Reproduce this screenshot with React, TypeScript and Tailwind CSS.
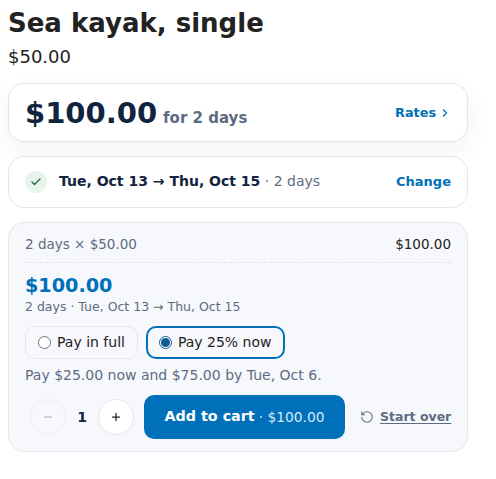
import { Check, ChevronRight, Minus, Plus, RotateCcw } from "lucide-react";

export default function App() {
  return (
    <div className="w-[460px] ml-2 pt-[5px] font-['DejaVu_Sans',sans-serif] text-[#1f2328]">
      <h1 className="text-[26px] leading-9 font-bold text-[#222222]">Sea kayak, single</h1>
      <p className="mt-[4px] text-[18px] leading-6 text-[#222222]">$50.00</p>

      <div className="mt-[14px] h-[59px] rounded-2xl border border-[#e3e6ee] bg-white pl-[16px] pr-[20px] flex items-center justify-between shadow-[0_8px_24px_rgba(15,35,70,0.06)]">
        <div className="flex items-baseline gap-[6px]">
          <span className="text-[29px] leading-9 font-bold text-[#10233f]">$100.00</span>
          <span className="text-[15px] font-bold text-[#5d6b82]">for 2 days</span>
        </div>
        <div className="flex items-center gap-[3px] text-[12.8px] font-bold text-[#0070bb]">
          <span>Rates</span>
          <ChevronRight size={12} strokeWidth={2.5} className="-mr-[4px]" />
        </div>
      </div>

      <div className="mt-[14px] h-[52px] rounded-2xl border border-[#e3e6ee] bg-white pl-[16px] pr-[16px] flex items-center justify-between">
        <div className="flex items-center gap-3">
          <span className="w-[22px] h-[22px] rounded-full bg-[#e6f4ea] flex items-center justify-center text-[#1c6b38]">
            <Check size={12} strokeWidth={2.5} />
          </span>
          <span className="text-[14px] text-[#5d6b82] -mt-[2px]">
            <span className="font-bold text-[#10233f]">Tue, Oct 13 → Thu, Oct 15</span> · 2 days
          </span>
        </div>
        <span className="text-[13px] font-bold text-[#0070bb]">Change</span>
      </div>

      <div className="mt-[14px] h-[230px] rounded-2xl border border-[#e3e6ee] bg-[#f7f8fc] px-4 pt-[11px]">
        <div className="flex justify-between items-center text-[13.5px] leading-5 pb-[8px] border-b border-dashed border-[#e0e3ea]">
          <span className="text-[#5d6b82]">2 days × $50.00</span>
          <span className="text-[#222222]">$100.00</span>
        </div>
        <div className="mt-[11px] text-[19.2px] leading-6 font-bold text-[#0070bb]">$100.00</div>
        <div className="mt-[1px] text-[12.5px] leading-4 text-[#5d6b82]">2 days · Tue, Oct 13 → Thu, Oct 15</div>

        <div className="mt-[11px] flex gap-2">
          <div className="h-[33px] px-3 rounded-[10px] border border-[#e3e6ee] flex items-center gap-[6px] text-[14px] text-[#222222]">
            <span className="w-[13px] h-[13px] rounded-full border border-[#767676] bg-white" />
            Pay in full
          </div>
          <div className="h-[33px] px-[11px] rounded-[10px] border-2 border-[#0070bb] flex items-center gap-[6px] text-[14px] text-[#222222]">
            <span className="w-[13px] h-[13px] rounded-full border border-[#0b5c95] bg-white flex items-center justify-center">
              <span className="w-[9px] h-[9px] rounded-full bg-[#0b5c95]" />
            </span>
            Pay 25% now
          </div>
        </div>

        <p className="mt-[6px] text-[14px] leading-5 text-[#5d6b82]">Pay $25.00 now and $75.00 by Tue, Oct 6.</p>

        <div className="mt-[10px] flex items-center">
          <button className="shrink-0 ml-[5px] w-9 h-9 rounded-full border border-[#eceef3] bg-[#f7f8fc] flex items-center justify-center text-[#b4bac5]">
            <Minus size={12} strokeWidth={2.5} />
          </button>
          <span className="shrink-0 w-[32px] text-center text-[14px] font-bold text-[#10233f]">1</span>
          <button className="shrink-0 w-9 h-9 rounded-full border border-[#e3e6ee] bg-white flex items-center justify-center text-[#222222]">
            <Plus size={12} strokeWidth={2.5} />
          </button>
          <button className="shrink-0 ml-[10px] w-[201px] h-11 rounded-[10px] bg-[#0070bb] text-white flex items-center justify-center gap-1 text-[14.3px]">
            <span className="font-bold">Add to cart</span>
            <span className="text-[13.8px] text-[#d5e8f5]">· $100.00</span>
          </button>
          <div className="shrink-0 ml-[15px] flex items-center gap-[6px] text-[#5d6b82] whitespace-nowrap">
            <RotateCcw size={14} strokeWidth={1.75} />
            <span className="text-[12.5px] font-bold underline underline-offset-2">Start over</span>
          </div>
        </div>
      </div>
    </div>
  );
}
